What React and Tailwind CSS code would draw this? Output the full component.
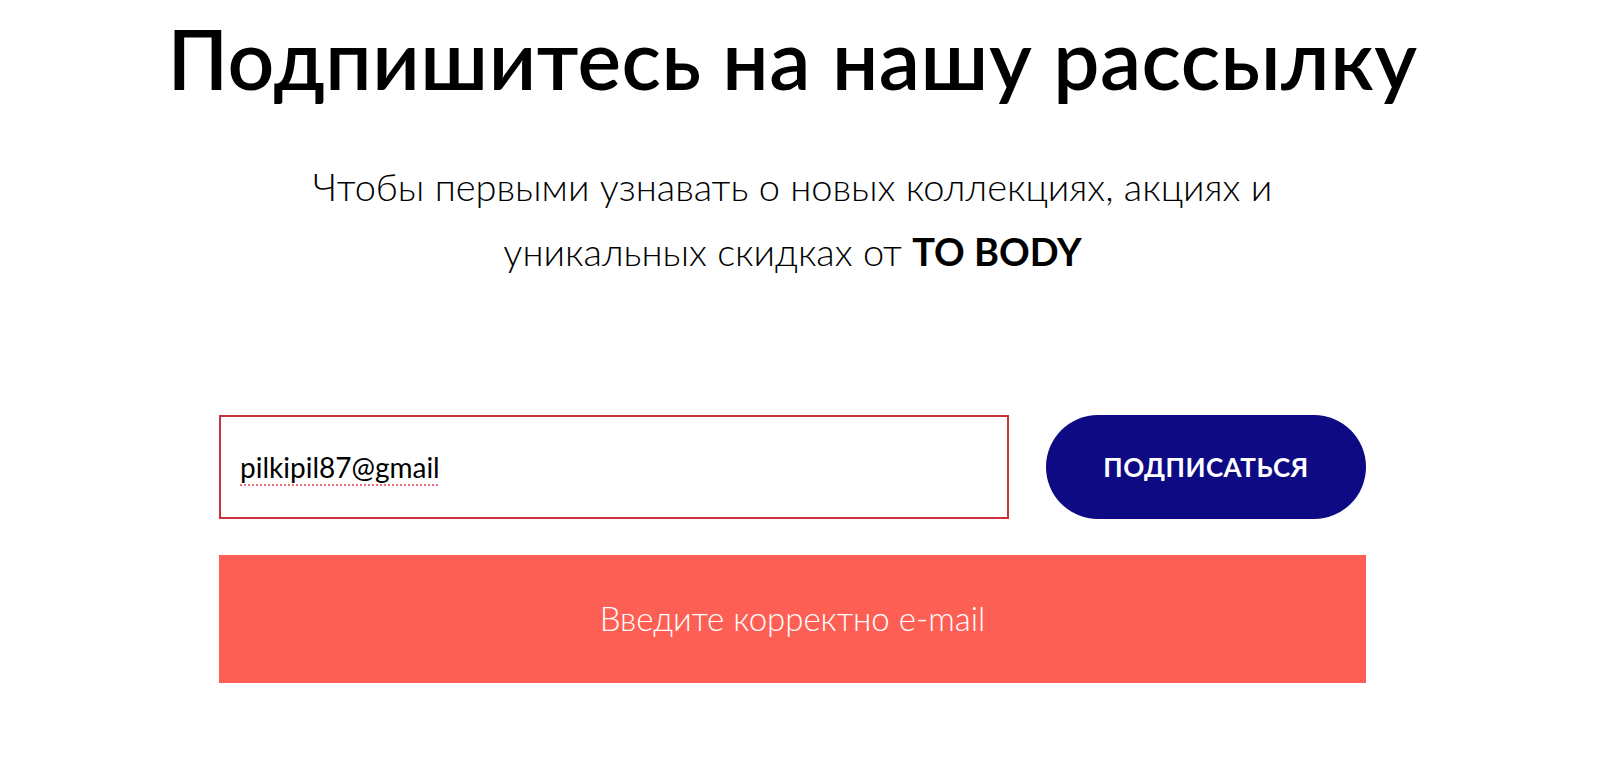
export default function App() {
  return (
    <div
      className="min-h-[772px] bg-white text-black"
      style={{ fontFamily: "Lato, 'Noto Sans', sans-serif" }}
    >
      <div className="ml-[219px] w-[1147px] flex flex-col items-center">
        <h1 className="mt-[8px] text-[82px] leading-[100px] font-semibold tracking-[0.5px] whitespace-nowrap">
          Подпишитесь на нашу рассылку
        </h1>
        <p className="mt-[46px] text-[38px] leading-[65px] font-light text-center whitespace-nowrap">
          Чтобы первыми узнавать о новых коллекциях, акциях и
          <br />
          уникальных скидках от <span className="font-bold">TO BODY</span>
        </p>

        <div className="mt-[131px] w-full flex gap-[37px]">
          <div className="flex-1 h-[104px] border-2 border-[#c8323c] flex items-center px-[19px]">
            <span className="text-[28px] underline decoration-dotted decoration-[#e8707a] decoration-2 underline-offset-[6px]">
              pilkipil87@gmail
            </span>
          </div>
          <button className="w-[320px] h-[104px] rounded-full bg-[#0e0a84] text-white text-[26px] font-bold tracking-[0.5px]">
            ПОДПИСАТЬСЯ
          </button>
        </div>

        <div className="mt-[36px] w-full h-[128px] bg-[#fd5f55] flex items-center justify-center">
          <span className="text-[33px] font-light text-white">
            Введите корректно e-mail
          </span>
        </div>
      </div>
    </div>
  );
}
